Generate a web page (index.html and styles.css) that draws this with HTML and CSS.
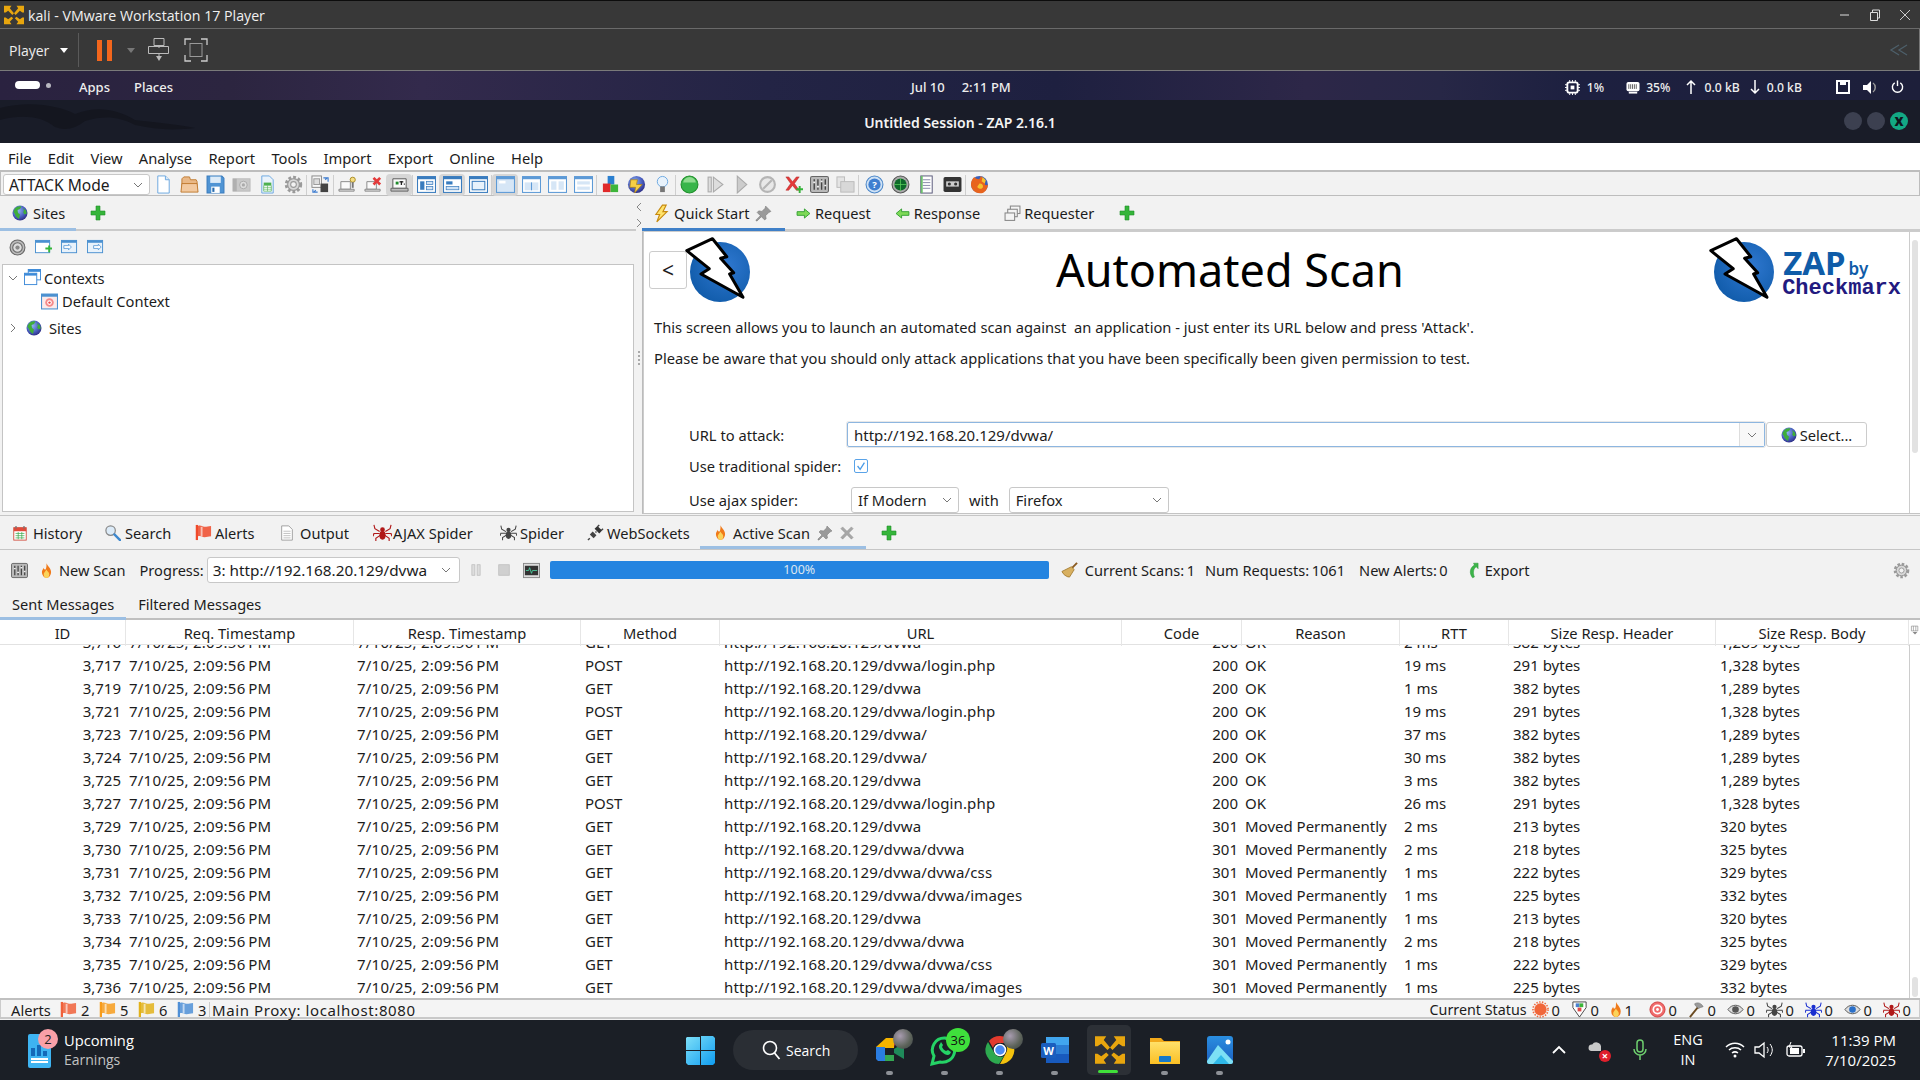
FILE: index.html
```html
<!DOCTYPE html>
<html lang="en">
<head>
<meta charset="utf-8">
<title>kali - VMware Workstation 17 Player</title>
<link rel="stylesheet" href="styles.css">
</head>
<body>
<svg class="sprite" width="0" height="0" aria-hidden="true">
<defs>
<radialGradient id="gGlobe" cx=".4" cy=".35" r=".7"><stop offset="0" stop-color="#8fb4ee"/><stop offset=".6" stop-color="#4a5fc0"/><stop offset="1" stop-color="#2b2a80"/></radialGradient>
<radialGradient id="gLogo" cx=".6" cy=".4" r=".7"><stop offset="0" stop-color="#2f78d0"/><stop offset="1" stop-color="#0f5aa8"/></radialGradient>
<linearGradient id="gWin" x1="0" y1="0" x2="1" y2="1"><stop offset="0" stop-color="#7fe0f8"/><stop offset="1" stop-color="#0f9cf0"/></linearGradient>
<linearGradient id="gFold" x1="0" y1="0" x2="0" y2="1"><stop offset="0" stop-color="#ffe06a"/><stop offset="1" stop-color="#fbbf24"/></linearGradient>
<linearGradient id="gPho" x1="0" y1="0" x2="0" y2="1"><stop offset="0" stop-color="#2a8ee0"/><stop offset="1" stop-color="#1c5fc0"/></linearGradient>
<symbol id="globe" viewBox="0 0 16 16"><circle cx="8" cy="8" r="7.5" fill="url(#gGlobe)"/><path d="M3 3.5C5 1 8 .8 9.5 1.5L8 4 5.5 5 6 8l2 1.500L7 14C4 12 3 10 3 9L1.500 7C1.500 6 2 5 3 3.500zM11 3l3 2.500.8 3-2.300 1-1.500-2.500L12 6z" fill="#3fae3a"/></symbol>
<symbol id="plus" viewBox="0 0 16 16"><path d="M6 1h4v5h5v4h-5v5H6v-5H1V6h5z" fill="#35b53a" stroke="#1f8f2a" stroke-width=".6"/></symbol>
<symbol id="bolt" viewBox="0 0 16 20"><path d="M9 1 2 11h4l-3 8 11-11H9.500L13 1z" fill="#ffe36b" stroke="#c78a10" stroke-width="1.200"/></symbol>
<symbol id="pin" viewBox="0 0 16 16"><path d="M10 1l5 5-2 1-3 3 .5 3L9 14 6 11l-4 4-1 0 0-1 4-4L2 7l1.500-1.500 3 .5 3-3z" fill="#9a9a9a" stroke="#777" stroke-width=".5"/></symbol>
<symbol id="aright" viewBox="0 0 16 12"><path d="M1 4h8V1l6 5-6 5V8H1z" fill="#7ed957" stroke="#2f9e2f"/></symbol>
<symbol id="aleft" viewBox="0 0 16 12"><path d="M15 4H7V1L1 6l6 5V8h8z" fill="#7ed957" stroke="#2f9e2f"/></symbol>
<symbol id="stack" viewBox="0 0 16 16"><rect x="6" y="1" width="9" height="7" fill="#f4f4f4" stroke="#888"/><rect x="3.500" y="4" width="9" height="7" fill="#f4f4f4" stroke="#888"/><rect x="1" y="7.500" width="9" height="7" fill="#f4f4f4" stroke="#888"/></symbol>
<symbol id="target" viewBox="0 0 16 16"><circle cx="8" cy="8" r="7" fill="#bbb" stroke="#666"/><circle cx="8" cy="8" r="4.500" fill="#ddd" stroke="#666"/><circle cx="8" cy="8" r="2" fill="#888"/></symbol>
<symbol id="winplus" viewBox="0 0 18 18"><rect x=".5" y="1.500" width="15" height="13" fill="#fff" stroke="#4a90d0"/><rect x=".5" y="1.500" width="15" height="2.500" fill="#4a90d0"/><path d="M11 9h3V7h2v2h2v2h-2v3h-2v-3h-3z" fill="#35b53a"/></symbol>
<symbol id="winin" viewBox="0 0 18 18"><rect x=".5" y="1.500" width="16" height="13" fill="#e8f2fb" stroke="#4a90d0"/><rect x=".5" y="1.500" width="16" height="2.500" fill="#4a90d0"/><path d="M3 7h5V5.500l3 3-3 3V10H3z" fill="#fff" stroke="#4a90d0" stroke-width=".8"/></symbol>
<symbol id="winout" viewBox="0 0 18 18"><rect x=".5" y="1.500" width="16" height="13" fill="#e8f2fb" stroke="#4a90d0"/><rect x=".5" y="1.500" width="16" height="2.500" fill="#4a90d0"/><path d="M7 7h5V5.500l3 3-3 3V10H7z" fill="#fff" stroke="#4a90d0" stroke-width=".8"/></symbol>
<symbol id="ctxs" viewBox="0 0 18 18"><rect x="4.500" y=".5" width="13" height="11" fill="#fff" stroke="#3d8ad8"/><rect x="4.500" y=".5" width="13" height="2.500" fill="#3d8ad8"/><rect x=".5" y="4.500" width="13" height="12" fill="#fff" stroke="#3d8ad8"/><rect x=".5" y="4.500" width="13" height="2.500" fill="#3d8ad8"/></symbol>
<symbol id="ctx" viewBox="0 0 16 16"><rect x=".5" y="1" width="15" height="14" fill="#fbeaea" stroke="#4a90d0"/><rect x=".5" y="1" width="15" height="2.500" fill="#4a90d0"/><circle cx="8" cy="9" r="4" fill="#f58a8a"/><circle cx="8" cy="9" r="2.200" fill="#fff"/><circle cx="8" cy="9" r="1.100" fill="#e8484a"/></symbol>
<symbol id="doc" viewBox="0 0 16 20"><path d="M2 1h8l4 4v14H2z" fill="#fff" stroke="#6aa8e0"/><path d="M10 1v4h4" fill="#d8e8f8" stroke="#6aa8e0"/></symbol>
<symbol id="folder" viewBox="0 0 20 20"><path d="M2 17V4l2-2h6l1 3h6l1 2v10z" fill="#e9b887" stroke="#c07a30"/><path d="M1 18l1-9h16l1 9z" fill="#f2c9a0" stroke="#c07a30"/></symbol>
<symbol id="floppy" viewBox="0 0 18 18"><path d="M1 1h14l2 2v14H1z" fill="#4f94d4" stroke="#3a7cbe"/><rect x="4" y="1.500" width="10" height="6" fill="#dcebf8"/><rect x="5" y="11" width="8" height="6" fill="#fff"/><rect x="6" y="12" width="2" height="4" fill="#2a6cae"/></symbol>
<symbol id="cam" viewBox="0 0 20 18"><rect x="1" y="3" width="18" height="13" fill="#c9c9c9" stroke="#bbb"/><circle cx="12" cy="9.500" r="4" fill="#ddd" stroke="#aaa"/><circle cx="12" cy="9.500" r="1.700" fill="#aaa"/><rect x="1" y="3" width="4" height="13" fill="#b0b0b0"/></symbol>
<symbol id="sheet" viewBox="0 0 16 20"><path d="M2 1h8l4 4v14H2z" fill="#eaf3fb" stroke="#6aa8e0"/><rect x="4" y="8" width="8" height="2.500" fill="#4db04d"/><path d="M4 11h8v6H4z" fill="#fff" stroke="#4db04d" stroke-width=".7"/><path d="M4 13h8M4 15h8M8 11v6" stroke="#4db04d" stroke-width=".6"/></symbol>
<symbol id="gear" viewBox="0 0 18 18"><circle cx="9" cy="9" r="6.500" fill="#ccc" stroke="#9a9a9a" stroke-width="3.500" stroke-dasharray="2.500 1.800"/><circle cx="9" cy="9" r="5.500" fill="#d8d8d8" stroke="#999"/><circle cx="9" cy="9" r="2.700" fill="#f2f2f2" stroke="#999"/></symbol>
<symbol id="sess" viewBox="0 0 20 20"><rect x="1" y="1" width="10" height="12" fill="#f8f8f8" stroke="#888"/><rect x="3" y="4" width="6" height="6" fill="#ddd" stroke="#999"/><rect x="10" y="9" width="8" height="9" fill="#444"/><path d="M13 3h5v4M17 3l-2 2" fill="none" stroke="#3d7cd0" stroke-width="1.200"/><path d="M2 15v3h5M3 18l2-2" fill="none" stroke="#3d7cd0" stroke-width="1.200"/></symbol>
<symbol id="lapbulb" viewBox="0 0 20 18"><path d="M3 6h10v8H3z" fill="#fafafa" stroke="#888"/><path d="M1 14h16v2H1z" fill="#ddd" stroke="#888"/><circle cx="15.500" cy="4" r="2.700" fill="#f5dd84" stroke="#a88a20"/><rect x="14.500" y="6.500" width="2" height="6" fill="#777"/></symbol>
<symbol id="lapx" viewBox="0 0 20 18"><path d="M3 6h10v8H3z" fill="#fafafa" stroke="#888"/><path d="M1 14h16v2H1z" fill="#ddd" stroke="#888"/><path d="M11 1l2.500 2.500L16 1l2 2-2.500 2.500L18 8l-2 2-2.500-2.500L11 10 9 8l2.500-2.500L9 3z" fill="#e33a3a"/></symbol>
<symbol id="lapot" viewBox="0 0 20 18"><path d="M3 3h14v10H3z" fill="#fafafa" stroke="#555"/><path d="M1 13h18v3H1z" fill="#bbb" stroke="#666"/><rect x="6" y="6" width="3" height="3" fill="#1d8a2a"/><rect x="10" y="5.500" width="4" height="1.400" fill="#222"/><rect x="11.300" y="5.500" width="1.400" height="4" fill="#222"/><rect x="14.500" y="8" width="1.200" height="1.200" fill="#222"/></symbol>
<symbol id="lay1" viewBox="0 0 18 18"><rect x=".5" y="1.500" width="17" height="15" fill="#fff" stroke="#3a7cbe"/><rect x=".5" y="1.500" width="17" height="2.500" fill="#3a7cbe"/><rect x="3" y="6" width="4" height="8" fill="#3a7cbe"/><rect x="9" y="6" width="6" height="3" fill="#cfe2f5" stroke="#3a7cbe" stroke-width=".7"/><rect x="9" y="11" width="6" height="3" fill="#cfe2f5" stroke="#3a7cbe" stroke-width=".7"/></symbol>
<symbol id="lay2" viewBox="0 0 18 18"><rect x=".5" y="1.500" width="17" height="15" fill="#fff" stroke="#3a7cbe"/><rect x=".5" y="1.500" width="17" height="2.500" fill="#3a7cbe"/><rect x="3" y="6" width="6" height="3" fill="#3a7cbe"/><rect x="3" y="11" width="12" height="3" fill="#cfe2f5" stroke="#3a7cbe" stroke-width=".7"/></symbol>
<symbol id="lay3" viewBox="0 0 18 18"><rect x=".5" y="1.500" width="17" height="15" fill="#fff" stroke="#3a7cbe"/><rect x=".5" y="1.500" width="17" height="2.500" fill="#3a7cbe"/><rect x="3" y="6" width="12" height="8" fill="#e8f2fb" stroke="#3a7cbe"/></symbol>
<symbol id="lay4" viewBox="0 0 18 18"><rect x=".5" y="1.500" width="17" height="15" fill="#d6e6f6" stroke="#5d9ad6"/><rect x=".5" y="1.500" width="17" height="2.500" fill="#5d9ad6"/><rect x="3" y="5.500" width="6" height="2.500" fill="#fff"/></symbol>
<symbol id="lay5" viewBox="0 0 18 18"><rect x=".5" y="1.500" width="17" height="15" fill="#fff" stroke="#5d9ad6"/><rect x=".5" y="1.500" width="17" height="2.500" fill="#5d9ad6"/><rect x="2.500" y="7" width="13" height="7.500" fill="#d6e6f6"/><rect x="8.500" y="7" width="1" height="7.500" fill="#5d9ad6"/></symbol>
<symbol id="lay6" viewBox="0 0 18 18"><rect x=".5" y="1.500" width="17" height="15" fill="#fff" stroke="#5d9ad6"/><rect x=".5" y="1.500" width="17" height="2.500" fill="#5d9ad6"/><rect x="3" y="6" width="5" height="8" fill="#d6e6f6"/><rect x="10" y="6" width="5" height="8" fill="#d6e6f6"/></symbol>
<symbol id="lay7" viewBox="0 0 18 18"><rect x=".5" y="1.500" width="17" height="15" fill="#fff" stroke="#5d9ad6"/><rect x=".5" y="1.500" width="17" height="2.500" fill="#5d9ad6"/><rect x="3" y="6" width="12" height="3" fill="#d6e6f6"/><rect x="3" y="11" width="12" height="3" fill="#d6e6f6"/></symbol>
<symbol id="blocks" viewBox="0 0 18 20"><rect x="6" y="1" width="7" height="9" fill="#2a7fd0"/><rect x="1" y="9" width="8" height="9" fill="#e02a2a"/><rect x="9" y="10" width="8" height="8" fill="#3db53a"/></symbol>
<symbol id="gbolt" viewBox="0 0 20 20"><circle cx="10" cy="10" r="9" fill="url(#gGlobe)"/><path d="M4 5h7l-1 5h6L8 19l1-6H3z" fill="#f6cf45" stroke="#a87a10" stroke-width=".7"/></symbol>
<symbol id="bulb" viewBox="0 0 16 20"><circle cx="8" cy="7" r="5.500" fill="#e8f2fb" stroke="#6aa8e0"/><rect x="5.500" y="12" width="5" height="6" fill="#777"/></symbol>
<symbol id="gball" viewBox="0 0 18 18"><circle cx="9" cy="9" r="8" fill="#38b54a" stroke="#1f8f2a"/><path d="M3 7a6 5 0 0 1 12 0z" fill="#8fdc8f"/></symbol>
<symbol id="step" viewBox="0 0 18 18"><rect x="2" y="2" width="3" height="14" fill="#ddd" stroke="#aaa"/><path d="M7 2l9 7-9 7z" fill="#ddd" stroke="#aaa"/></symbol>
<symbol id="play" viewBox="0 0 18 18"><path d="M5 1l9 8-9 8z" fill="#ccc" stroke="#aaa"/></symbol>
<symbol id="nosign" viewBox="0 0 18 18"><circle cx="9" cy="9" r="7" fill="#e8e8e8" stroke="#b5b5b5" stroke-width="2"/><path d="M5 13l8-8" stroke="#b5b5b5" stroke-width="2"/></symbol>
<symbol id="xplus" viewBox="0 0 20 20"><path d="M2 2h3l4 5 4-5h3l-5 7 5 7h-3l-4-5-4 5H2l5-7z" fill="#e33a3a" stroke="#b02020" stroke-width=".5"/><path d="M13 14h2.500v-2.500h2V14H20v2h-2.500v3h-2v-3H13z" fill="#35b53a"/></symbol>
<symbol id="mixer" viewBox="0 0 18 16"><rect x=".5" y=".5" width="17" height="15" rx="1.500" fill="#b9b9b9" stroke="#666"/><path d="M4 3v10M7.500 3v10M11 3v10M14.500 3v10" stroke="#444" stroke-width="1.300"/><path d="M3 6h2M6.500 10h2M10 5h2M13.500 9h2" stroke="#eee" stroke-width="1.500"/></symbol>
<symbol id="docs2" viewBox="0 0 20 18"><rect x="1" y="1" width="8" height="11" fill="#e4e4e4" stroke="#bbb"/><rect x="5" y="6" width="14" height="11" fill="#d8d8d8" stroke="#bbb"/></symbol>
<symbol id="help" viewBox="0 0 18 18"><circle cx="9" cy="9" r="8" fill="#cfe2f5" stroke="#4a86c8"/><circle cx="9" cy="9" r="5.800" fill="#3f7ed0"/><text x="9" y="12.500" font-size="9" font-family="Noto Sans" font-weight="700" text-anchor="middle" fill="#fff">?</text></symbol>
<symbol id="radar" viewBox="0 0 18 18"><circle cx="9" cy="9" r="8" fill="#aaa" stroke="#555"/><circle cx="9" cy="9" r="5.800" fill="#0e6a2a"/><path d="M9 3v12M3 9h12" stroke="#5bd05b" stroke-width=".7"/></symbol>
<symbol id="notes" viewBox="0 0 16 20"><rect x="2" y="1" width="12" height="18" fill="#fff" stroke="#557"/><path d="M4 5h8M4 8h8M4 11h8M4 14h8" stroke="#88a" /><rect x="2" y="1" width="2" height="18" fill="#6cbf6c"/></symbol>
<symbol id="tape" viewBox="0 0 18 16"><rect x=".5" y="1" width="17" height="14" rx="1.500" fill="#333"/><rect x="3" y="5" width="12" height="5" fill="#ccc"/><circle cx="6" cy="7.500" r="1.500" fill="#333"/><circle cx="12" cy="7.500" r="1.500" fill="#333"/></symbol>
<symbol id="firefox" viewBox="0 0 18 18"><circle cx="9" cy="9" r="8" fill="#3a5fb8"/><path d="M4 2C1 5 0 9 2 13s7 5 10 4 5-5 5-8c-1 1-2 1-3 0 1-3-1-6-4-8 0 2-1 3-2 3S6 4 4 2z" fill="#e8641e"/><path d="M12 2l3 3-1 3-3-2z" fill="#f5c22e"/><path d="M9 8c2 0 4 1 3 4-2 2-5 1-5-1z" fill="#f5c22e"/></symbol>
<symbol id="cal" viewBox="0 0 16 18"><rect x="1" y="3" width="14" height="14" fill="#fff" stroke="#d04a3a"/><rect x="1" y="3" width="14" height="4" fill="#e04a3a"/><path d="M3.500 1v3M12.500 1v3" stroke="#777" stroke-width="1.500"/><path d="M3 9.500h10M3 12h10M3 14.500h10M6 8v8M10 8v8" stroke="#3aa84a" stroke-width=".8"/></symbol>
<symbol id="mag" viewBox="0 0 18 18"><circle cx="7" cy="7" r="5" fill="#dcebf8" stroke="#888" stroke-width="1.300"/><path d="M11 11l6 6" stroke="#3d88cf" stroke-width="2.500" stroke-linecap="round"/></symbol>
<symbol id="flag" viewBox="0 0 18 18"><path d="M2 1v16" stroke="currentColor" stroke-width="2.400"/><path d="M3 2c4-1 4 1 7 1s4-1 7-1v11c-3 0-4 1-7 1s-3-2-7-1z" fill="currentColor" opacity=".85"/><path d="M7 3v10" stroke="#fff" stroke-opacity=".6" stroke-width="2"/></symbol>
<symbol id="page" viewBox="0 0 14 18"><path d="M1 1h8l4 4v12H1z" fill="#fff" stroke="#999"/><path d="M3 7h8M3 9.500h8M3 12h8M3 14.500h8" stroke="#aaa" stroke-width=".8"/></symbol>
<symbol id="spider" viewBox="0 0 20 20"><ellipse cx="10" cy="13" rx="3.300" ry="4.500" fill="currentColor"/><circle cx="10" cy="7" r="2.500" fill="currentColor"/><path d="M7 9 2 6 1 2M7 11l-6 0-1 3M7.500 13 3 16l0 3M13 9l5-3 1-4M13 11l6 0 1 3M12.500 13l4.500 3 0 3" stroke="currentColor" stroke-width="1.200" fill="none"/></symbol>
<symbol id="plug" viewBox="0 0 18 18"><path d="M11 2l5 5-3 3-5-5z" fill="#333"/><path d="M13 1l-2 2M17 5l-2 2" stroke="#444" stroke-width="1.500"/><path d="M6 8l4 4-3 3-4-4z" fill="#444"/><path d="M3 15l-2 2M9 9l1-1" stroke="#444" stroke-width="1.500"/></symbol>
<symbol id="flame" viewBox="0 0 12 18"><path d="M6 1c1 3 5 5 5 10a5 6 0 0 1-10 0c0-2 1-3 2-5 0 2 1 2 2 2 1-2 1-4 1-7z" fill="#f07a1a"/><path d="M6 8c.5 2 3 3 3 5a3 4 0 0 1-6 0c0-1 1-2 3-5z" fill="#fbd35a"/></symbol>
<symbol id="xgrey" viewBox="0 0 16 16"><path d="M3 1l5 5 5-5 2 2-5 5 5 5-2 2-5-5-5 5-2-2 5-5-5-5z" fill="#a8a8a8" stroke="#888" stroke-width=".5"/></symbol>
<symbol id="pause2" viewBox="0 0 16 16"><rect x="2.500" y="1" width="4" height="14" fill="#ddd" stroke="#bbb"/><rect x="9.500" y="1" width="4" height="14" fill="#ddd" stroke="#bbb"/></symbol>
<symbol id="stop2" viewBox="0 0 16 16"><rect x="1" y="1" width="14" height="14" fill="#d0d0d0" stroke="#bbb"/></symbol>
<symbol id="chart" viewBox="0 0 18 16"><rect x=".5" y=".5" width="17" height="15" fill="#ddd" stroke="#888"/><rect x="2" y="3" width="14" height="10" fill="#333"/><path d="M3 8h3l1-3 2 6 1-3h5" fill="none" stroke="#4bd0a0" stroke-width=".9"/></symbol>
<symbol id="broom" viewBox="0 0 18 18"><path d="M17 1l-6 6" stroke="#8a5a20" stroke-width="2"/><path d="M11 5l3 3-5 8c-3 0-7-3-8-6z" fill="#d8b060" stroke="#9a7020" stroke-width=".8"/></symbol>
<symbol id="export" viewBox="0 0 12 18"><path d="M11 1l0 6-2-2C6 7 5 11 7 16l-2 1C1 12 2 6 7 3L6 1z" fill="#3cb54a" stroke="#1f8f2a" stroke-width=".5"/></symbol>
<symbol id="sun" viewBox="0 0 18 18"><circle cx="9" cy="9" r="6.500" fill="#f0663a"/><circle cx="9" cy="9" r="8" fill="none" stroke="#f0663a" stroke-width="1.700" stroke-dasharray="1.500 1.500"/></symbol>
<symbol id="shield" viewBox="0 0 18 18"><path d="M2 1h14v6l-7 10L2 7z" fill="#fff" stroke="#444"/><rect x="5" y="2.500" width="4" height="4" fill="#4a80d0"/><rect x="9" y="2.500" width="4" height="4" fill="#3db53a"/><rect x="7" y="7" width="4" height="4" fill="#e04a4a"/></symbol>
<symbol id="bullseye" viewBox="0 0 18 18"><circle cx="9" cy="9" r="8" fill="#f06a6a" stroke="#d04040"/><circle cx="9" cy="9" r="5.300" fill="#fff"/><circle cx="9" cy="9" r="3.500" fill="#f06a6a"/><circle cx="9" cy="9" r="1.500" fill="#fff"/></symbol>
<symbol id="hammer" viewBox="0 0 18 18"><path d="M2 17l9-11" stroke="#6a4a20" stroke-width="2"/><path d="M7 3c3-2 7-1 9 3l-3 1-2 1-3-3z" fill="#9a9a9a" stroke="#666" stroke-width=".6"/></symbol>
<symbol id="eye" viewBox="0 0 18 14"><path d="M1 7c4-6 12-6 16 0-4 6-12 6-16 0z" fill="#ddd" stroke="#555"/><circle cx="9" cy="7" r="3.500" fill="currentColor"/></symbol>
<symbol id="vm" viewBox="0 0 24 24"><g fill="#e8a60e"><path d="M0 1h9L7 4l5 6-2 2-5-5-3 2-2 0z"/><path d="M24 1h-9l2 3-5 6 2 2 5-5 3 2 2 0z"/><path d="M0 23h9l-2-3 4-4-2-2-4 3-3-2-2 0z"/><path d="M24 23h-9l2-3-4-4 2-2 4 3 3-2 2 0z"/></g></symbol>
<symbol id="zap" viewBox="0 0 72 70"><ellipse cx="35" cy="36" rx="30" ry="30" fill="url(#gLogo)"/><path d="M27.500 2.700 1.800 14.700 24.200 32.700 16 38 58 61.300 44.600 38 48.700 36.700 35.600 22.300 41.800 20.700z" fill="#fff" stroke="#000" stroke-width="3" stroke-linejoin="round"/></symbol>
<symbol id="chev" viewBox="0 0 10 6"><path d="M1 1l4 4 4-4" fill="none" stroke="#777"/></symbol>
</defs>
</svg>

<header class="vm-title">
  <svg class="vm-logo"><use href="#vm"/></svg>
  <span>kali - VMware Workstation 17 Player</span>
  <div class="win-ctrl">
    <svg viewBox="0 0 12 12"><path d="M1 6h9" stroke="#ddd"/></svg>
    <svg viewBox="0 0 12 12"><path d="M1.500 3.500h7v8h-7zM3.500 3V1h7v8H9" fill="none" stroke="#ddd"/></svg>
    <svg viewBox="0 0 12 12"><path d="M1 1l10 10M11 1L1 11" stroke="#ddd" stroke-width=".9"/></svg>
  </div>
</header>
<div class="vm-bar">
  <span class="vm-player">Player</span><i class="caret white"></i>
  <i class="vm-sep"></i>
  <div class="pause"><b></b><b></b></div><i class="caret grey"></i>
  <svg class="vm-send" viewBox="0 0 22 24"><path d="M6 .5h10v7H6zM.5 8.500h20v7H.5zM11 8v2M11 15.500v5" fill="none" stroke="#bbb"/><path d="M8 18h6l-3 5z" fill="#bbb"/></svg>
  <svg class="vm-full" viewBox="0 0 24 24"><path d="M1 7V1h6M17 1h6v6M23 17v6h-6M7 23H1v-6" fill="none" stroke="#ccc" stroke-width="1.300"/><rect x="6" y="5.500" width="12" height="13" fill="none" stroke="#999"/></svg>
  <svg class="vm-more" viewBox="0 0 18 12"><path d="M9 1 1 6l8 5M17 1 9 6l8 5" fill="none" stroke="#4d5f6a" stroke-width="1.300"/></svg>
</div>

<div class="kali-bar">
  <i class="pill"></i><i class="pdot"></i>
  <span class="k-apps">Apps</span><span class="k-places">Places</span>
  <span class="k-date">Jul 10</span><span class="k-time">2:11 PM</span>
  <svg class="k-cpu" viewBox="0 0 16 16"><rect x="2.500" y="2.500" width="11" height="11" rx="2" fill="none" stroke="#fff" stroke-width="2"/><rect x="6" y="6" width="4" height="4" fill="#fff"/><path d="M5 0v2M8 0v2M11 0v2M5 14v2M8 14v2M11 14v2M0 5h2M0 8h2M0 11h2M14 5h2M14 8h2M14 11h2" stroke="#fff"/></svg>
  <span class="k-t k-1">1%</span>
  <svg class="k-mem" viewBox="0 0 15 13"><rect x=".5" y=".5" width="14" height="10" rx="2" fill="#fff"/><path d="M3 3v5M5 3v5M7 3v5M9 3v5M11 3v5" stroke="#333" stroke-width=".8"/><rect x="3" y="11" width="9" height="2" fill="#fff"/></svg>
  <span class="k-t k-35">35%</span>
  <svg class="k-up" viewBox="0 0 10 14"><path d="M5 14V1M1 5l4-4 4 4" fill="none" stroke="#fff" stroke-width="1.500"/></svg><span class="k-t k-r1">0.0 kB</span>
  <svg class="k-down" viewBox="0 0 10 14"><path d="M5 0v13M1 9l4 4 4-4" fill="none" stroke="#fff" stroke-width="1.500"/></svg><span class="k-t k-r2">0.0 kB</span>
  <svg class="k-scr" viewBox="0 0 14 14"><path d="M1 1h12v12H1z" fill="none" stroke="#fff" stroke-width="2"/><path d="M4 1h6v4H4z" fill="#fff"/></svg>
  <svg class="k-vol" viewBox="0 0 15 15"><path d="M0 5h4l4-4v13l-4-4H0z" fill="#fff"/><path d="M10 3c3 2 3 7 0 9" stroke="#999" fill="none" stroke-width="1.500"/></svg>
  <svg class="k-pow" viewBox="0 0 14 14"><path d="M7 0v6" stroke="#fff" stroke-width="1.500"/><path d="M4 2.500a5.500 5.500 0 1 0 6 0" stroke="#fff" fill="none" stroke-width="1.500"/></svg>
</div>
<div class="zap-title">
  <svg class="dragon" viewBox="0 0 220 43"><path d="M0 8c30-8 60-2 75 6 20-8 40-6 60 6 15 2 40 4 60 8-25 3-40 1-60-3-15-8-30-10-50-4-10 8-20 10-30 6C40 15 20 15 0 20z" fill="#14161f"/></svg>
  <span class="zap-name">Untitled Session - ZAP 2.16.1</span>
  <div class="dots"><i></i><i></i><i class="cl">x</i></div>
</div>

<nav class="menu">
  <span>File</span><span>Edit</span><span>View</span><span>Analyse</span><span>Report</span><span>Tools</span><span>Import</span><span>Export</span><span>Online</span><span>Help</span>
</nav>

<div class="tool">
  <div class="combo mode"><span>ATTACK Mode</span><svg class="chev"><use href="#chev"/></svg></div>
  <a class="tb"><svg><use href="#doc"/></svg></a><a class="tb"><svg><use href="#folder"/></svg></a><a class="tb"><svg><use href="#floppy"/></svg></a><a class="tb"><svg><use href="#cam"/></svg></a><a class="tb"><svg><use href="#sheet"/></svg></a><a class="tb"><svg><use href="#gear"/></svg></a><i class="tsep"></i>
  <a class="tb"><svg><use href="#sess"/></svg></a><i class="tsep"></i>
  <a class="tb"><svg><use href="#lapbulb"/></svg></a><a class="tb"><svg><use href="#lapx"/></svg></a><a class="tb on"><svg><use href="#lapot"/></svg></a><i class="tsep"></i>
  <a class="tb"><svg><use href="#lay1"/></svg></a><a class="tb on"><svg><use href="#lay2"/></svg></a><a class="tb"><svg><use href="#lay3"/></svg></a><i class="tsep"></i>
  <a class="tb on"><svg><use href="#lay4"/></svg></a><a class="tb"><svg><use href="#lay5"/></svg></a><a class="tb"><svg><use href="#lay6"/></svg></a><a class="tb"><svg><use href="#lay7"/></svg></a><i class="tsep"></i>
  <a class="tb"><svg><use href="#blocks"/></svg></a><a class="tb"><svg><use href="#gbolt"/></svg></a><a class="tb"><svg><use href="#bulb"/></svg></a><i class="tsep"></i>
  <a class="tb"><svg><use href="#gball"/></svg></a><a class="tb"><svg><use href="#step"/></svg></a><a class="tb"><svg><use href="#play"/></svg></a><a class="tb"><svg><use href="#nosign"/></svg></a><a class="tb"><svg><use href="#xplus"/></svg></a><a class="tb"><svg><use href="#mixer"/></svg></a><a class="tb"><svg><use href="#docs2"/></svg></a><i class="tsep wide"></i>
  <a class="tb"><svg><use href="#help"/></svg></a><a class="tb"><svg><use href="#radar"/></svg></a><a class="tb"><svg><use href="#notes"/></svg></a><a class="tb"><svg><use href="#tape"/></svg></a><i class="tsep"></i>
  <a class="tb"><svg><use href="#firefox"/></svg></a>
</div>

<main class="upper">
  <section class="left">
    <div class="tabs ltabs">
      <div class="tab sel w76"><svg class="i15"><use href="#globe"/></svg><span>Sites</span></div>
      <svg class="i15 add"><use href="#plus"/></svg>
    </div>
    <div class="ltool">
      <svg class="i16"><use href="#target"/></svg><svg class="i16"><use href="#winplus"/></svg><svg class="i16"><use href="#winin"/></svg><svg class="i16"><use href="#winout"/></svg>
    </div>
    <div class="tree">
      <div class="node n1"><svg class="chv"><use href="#chev"/></svg><svg class="i16"><use href="#ctxs"/></svg><span>Contexts</span></div>
      <div class="node n2"><svg class="i16"><use href="#ctx"/></svg><span>Default Context</span></div>
      <div class="node n3"><svg class="chv rot"><use href="#chev"/></svg><svg class="i15"><use href="#globe"/></svg><span>Sites</span></div>
    </div>
  </section>
  <div class="vsplit">
    <svg viewBox="0 0 6 8"><path d="M5 0 1 4l4 4" fill="none" stroke="#888"/></svg>
    <svg viewBox="0 0 6 8"><path d="M1 0l4 4-4 4" fill="none" stroke="#888"/></svg>
    <i class="vgrip"></i>
  </div>
  <section class="right">
    <div class="tabs rtabs">
      <div class="tab qs"><svg class="i-bolt"><use href="#bolt"/></svg><span>Quick Start</span><svg class="i16"><use href="#pin"/></svg></div>
      <div class="tab r1"><svg class="i-arrow"><use href="#aright"/></svg><span>Request</span></div>
      <div class="tab r2"><svg class="i-arrow"><use href="#aleft"/></svg><span>Response</span></div>
      <div class="tab r3"><svg class="i16"><use href="#stack"/></svg><span>Requester</span></div>
      <svg class="i15 add2"><use href="#plus"/></svg>
    </div>
    <div class="panel">
      <div class="scan">
        <div class="scan-head">
          <button class="back">&lt;</button>
          <svg class="zaplogo"><use href="#zap"/></svg>
          <h1>Automated Scan</h1>
          <div class="brand">
            <svg class="zaplogo"><use href="#zap"/></svg>
            <div class="brand-t"><div class="brand-l1"><b class="bz">ZAP</b><b class="by">by</b></div><b class="bc">Checkmarx</b></div>
          </div>
        </div>
        <p class="p1">This screen allows you to launch an automated scan against&nbsp; an application - just enter its URL below and press 'Attack'.</p>
        <p class="p2">Please be aware that you should only attack applications that you have been specifically been given permission to test.</p>
        <div class="frow url">
          <label>URL to attack:</label>
          <div class="urlbox"><span>http://192.168.20.129/dvwa/</span><i class="urldrop"><svg class="chev"><use href="#chev"/></svg></i></div>
          <button class="select"><svg class="i15"><use href="#globe"/></svg>Select...</button>
        </div>
        <div class="frow trad">
          <label>Use traditional spider:</label>
          <i class="check"><svg viewBox="0 0 14 14"><path d="M3 7l3 4 5-8" fill="none" stroke="#4a9be8" stroke-width="1.500"/></svg></i>
        </div>
        <div class="frow ajax">
          <label>Use ajax spider:</label>
          <div class="combo cm1"><span>If Modern</span><svg class="chev"><use href="#chev"/></svg></div>
          <span class="with">with</span>
          <div class="combo cm2"><span>Firefox</span><svg class="chev"><use href="#chev"/></svg></div>
        </div>
      </div>
      <div class="vscroll"><i></i></div>
    </div>
  </section>
</main>
<div class="hgrip"></div>

<div class="btabs">
  <div class="btab w-hist"><svg class="i15"><use href="#cal"/></svg><span>History</span></div>
  <div class="btab w-sear"><svg class="i16"><use href="#mag"/></svg><span>Search</span></div>
  <div class="btab w-aler"><svg class="i16 c-red"><use href="#flag"/></svg><span>Alerts</span></div>
  <div class="btab w-outp"><svg class="i15"><use href="#page"/></svg><span>Output</span></div>
  <div class="btab w-ajax"><svg class="i18 c-dred"><use href="#spider"/></svg><span>AJAX Spider</span></div>
  <div class="btab w-spid"><svg class="i16 c-dgrey"><use href="#spider"/></svg><span>Spider</span></div>
  <div class="btab w-webs"><svg class="i16"><use href="#plug"/></svg><span>WebSockets</span></div>
  <div class="btab w-acti"><svg class="i-fl"><use href="#flame"/></svg><span>Active Scan</span><svg class="i15"><use href="#pin"/></svg><svg class="i14"><use href="#xgrey"/></svg></div>
  <svg class="i15 add3"><use href="#plus"/></svg>
</div>

<div class="scanbar">
  <svg class="i16 sb-mix"><use href="#mixer"/></svg>
  <svg class="i-fl sb-fl"><use href="#flame"/></svg><span class="sb-new">New Scan</span>
  <span class="sb-prog">Progress:</span>
  <div class="combo pcombo"><span>3: http://192.168.20.129/dvwa</span><svg class="chev"><use href="#chev"/></svg></div>
  <svg class="i12 sb-p"><use href="#pause2"/></svg>
  <svg class="i12 sb-s"><use href="#stop2"/></svg>
  <svg class="i16 sb-c"><use href="#chart"/></svg>
  <div class="bar">100%</div>
  <svg class="i16 sb-b"><use href="#broom"/></svg>
  <span class="sb-cs">Current Scans:&#8239;1</span>
  <span class="sb-nr">Num Requests:&#8239;1061</span>
  <span class="sb-na">New Alerts:&#8239;0</span>
  <svg class="i-ex"><use href="#export"/></svg><span class="sb-ex">Export</span>
  <svg class="i16 sb-g"><use href="#gear"/></svg>
</div>

<div class="subtabs">
  <div class="st sel">Sent Messages</div><div class="st">Filtered Messages</div>
</div>

<section class="grid">
  <div class="hdr">
    <div>ID</div><div>Req. Timestamp</div><div>Resp. Timestamp</div><div>Method</div><div>URL</div><div>Code</div><div>Reason</div><div>RTT</div><div>Size Resp. Header</div><div>Size Resp. Body</div>
    <div class="corner"><svg viewBox="0 0 10 12"><path d="M.5.5h8v6h-8zM3 .5v6M6 .5v6" fill="none" stroke="#888" stroke-width=".8"/><path d="M2 8h6l-3 3z" fill="#888"/></svg></div>
  </div>
  <div class="gbody">
    <div class="rows">
      <div class="row"><i>3,716</i><i>7/10/25, 2:09:56&#8239;PM</i><i>7/10/25, 2:09:56&#8239;PM</i><i>GET</i><i>http://192.168.20.129/dvwa</i><i>200</i><i>OK</i><i>2 ms</i><i>382 bytes</i><i>1,289 bytes</i></div>
      <div class="row"><i>3,717</i><i>7/10/25, 2:09:56&#8239;PM</i><i>7/10/25, 2:09:56&#8239;PM</i><i>POST</i><i>http://192.168.20.129/dvwa/login.php</i><i>200</i><i>OK</i><i>19 ms</i><i>291 bytes</i><i>1,328 bytes</i></div>
      <div class="row"><i>3,719</i><i>7/10/25, 2:09:56&#8239;PM</i><i>7/10/25, 2:09:56&#8239;PM</i><i>GET</i><i>http://192.168.20.129/dvwa</i><i>200</i><i>OK</i><i>1 ms</i><i>382 bytes</i><i>1,289 bytes</i></div>
      <div class="row"><i>3,721</i><i>7/10/25, 2:09:56&#8239;PM</i><i>7/10/25, 2:09:56&#8239;PM</i><i>POST</i><i>http://192.168.20.129/dvwa/login.php</i><i>200</i><i>OK</i><i>19 ms</i><i>291 bytes</i><i>1,328 bytes</i></div>
      <div class="row"><i>3,723</i><i>7/10/25, 2:09:56&#8239;PM</i><i>7/10/25, 2:09:56&#8239;PM</i><i>GET</i><i>http://192.168.20.129/dvwa/</i><i>200</i><i>OK</i><i>37 ms</i><i>382 bytes</i><i>1,289 bytes</i></div>
      <div class="row"><i>3,724</i><i>7/10/25, 2:09:56&#8239;PM</i><i>7/10/25, 2:09:56&#8239;PM</i><i>GET</i><i>http://192.168.20.129/dvwa/</i><i>200</i><i>OK</i><i>30 ms</i><i>382 bytes</i><i>1,289 bytes</i></div>
      <div class="row"><i>3,725</i><i>7/10/25, 2:09:56&#8239;PM</i><i>7/10/25, 2:09:56&#8239;PM</i><i>GET</i><i>http://192.168.20.129/dvwa</i><i>200</i><i>OK</i><i>3 ms</i><i>382 bytes</i><i>1,289 bytes</i></div>
      <div class="row"><i>3,727</i><i>7/10/25, 2:09:56&#8239;PM</i><i>7/10/25, 2:09:56&#8239;PM</i><i>POST</i><i>http://192.168.20.129/dvwa/login.php</i><i>200</i><i>OK</i><i>26 ms</i><i>291 bytes</i><i>1,328 bytes</i></div>
      <div class="row"><i>3,729</i><i>7/10/25, 2:09:56&#8239;PM</i><i>7/10/25, 2:09:56&#8239;PM</i><i>GET</i><i>http://192.168.20.129/dvwa</i><i>301</i><i>Moved Permanently</i><i>2 ms</i><i>213 bytes</i><i>320 bytes</i></div>
      <div class="row"><i>3,730</i><i>7/10/25, 2:09:56&#8239;PM</i><i>7/10/25, 2:09:56&#8239;PM</i><i>GET</i><i>http://192.168.20.129/dvwa/dvwa</i><i>301</i><i>Moved Permanently</i><i>2 ms</i><i>218 bytes</i><i>325 bytes</i></div>
      <div class="row"><i>3,731</i><i>7/10/25, 2:09:56&#8239;PM</i><i>7/10/25, 2:09:56&#8239;PM</i><i>GET</i><i>http://192.168.20.129/dvwa/dvwa/css</i><i>301</i><i>Moved Permanently</i><i>1 ms</i><i>222 bytes</i><i>329 bytes</i></div>
      <div class="row"><i>3,732</i><i>7/10/25, 2:09:56&#8239;PM</i><i>7/10/25, 2:09:56&#8239;PM</i><i>GET</i><i>http://192.168.20.129/dvwa/dvwa/images</i><i>301</i><i>Moved Permanently</i><i>1 ms</i><i>225 bytes</i><i>332 bytes</i></div>
      <div class="row"><i>3,733</i><i>7/10/25, 2:09:56&#8239;PM</i><i>7/10/25, 2:09:56&#8239;PM</i><i>GET</i><i>http://192.168.20.129/dvwa</i><i>301</i><i>Moved Permanently</i><i>1 ms</i><i>213 bytes</i><i>320 bytes</i></div>
      <div class="row"><i>3,734</i><i>7/10/25, 2:09:56&#8239;PM</i><i>7/10/25, 2:09:56&#8239;PM</i><i>GET</i><i>http://192.168.20.129/dvwa/dvwa</i><i>301</i><i>Moved Permanently</i><i>2 ms</i><i>218 bytes</i><i>325 bytes</i></div>
      <div class="row"><i>3,735</i><i>7/10/25, 2:09:56&#8239;PM</i><i>7/10/25, 2:09:56&#8239;PM</i><i>GET</i><i>http://192.168.20.129/dvwa/dvwa/css</i><i>301</i><i>Moved Permanently</i><i>1 ms</i><i>222 bytes</i><i>329 bytes</i></div>
      <div class="row"><i>3,736</i><i>7/10/25, 2:09:56&#8239;PM</i><i>7/10/25, 2:09:56&#8239;PM</i><i>GET</i><i>http://192.168.20.129/dvwa/dvwa/images</i><i>301</i><i>Moved Permanently</i><i>1 ms</i><i>225 bytes</i><i>332 bytes</i></div>
    </div>
    <div class="gscroll"><i></i></div>
  </div>
</section>

<footer class="status">
  <div class="st-left">
    <span class="al">Alerts</span>
    <span class="fl"><svg class="i16 c-fr"><use href="#flag"/></svg>2</span>
    <span class="fl"><svg class="i16 c-fo"><use href="#flag"/></svg>5</span>
    <span class="fl"><svg class="i16 c-fy"><use href="#flag"/></svg>6</span>
    <span class="fl"><svg class="i16 c-fb"><use href="#flag"/></svg>3</span>
    <i class="st-sep"></i>
    <span class="proxy">Main Proxy: localhost:8080</span>
  </div>
  <div class="st-right">
    <span class="cs">Current Status</span>
    <span class="si"><svg class="i16"><use href="#sun"/></svg>0</span>
    <span class="si"><svg class="i16"><use href="#shield"/></svg>0</span>
    <span class="si"><svg class="i-fl2"><use href="#flame"/></svg>1</span>
    <span class="si"><svg class="i16"><use href="#bullseye"/></svg>0</span>
    <span class="si"><svg class="i16"><use href="#hammer"/></svg>0</span>
    <span class="si"><svg class="i16 c-dk"><use href="#eye"/></svg>0</span>
    <span class="si"><svg class="i16 c-dgrey"><use href="#spider"/></svg>0</span>
    <span class="si"><svg class="i16 c-blue"><use href="#spider"/></svg>0</span>
    <span class="si"><svg class="i16 c-lb"><use href="#eye"/></svg>0</span>
    <span class="si"><svg class="i16 c-dred"><use href="#spider"/></svg>0</span>
  </div>
</footer>

<div class="taskbar">
  <div class="widget">
    <div class="w-ic">
      <svg viewBox="0 0 24 36"><rect y="2" width="23" height="34" rx="2" fill="#3eb4f2"/><rect x="3" y="16" width="4" height="8" fill="#1469b8"/><rect x="9" y="13" width="4" height="11" fill="#1469b8"/><rect x="15" y="19" width="4" height="5" fill="#1469b8"/><path d="M3 27h17M3 30h17" stroke="#fff" stroke-width="2"/></svg>
      <b class="w-badge">2</b>
    </div>
    <div class="w-t"><span>Upcoming</span><span class="w-s">Earnings</span></div>
  </div>
  <svg class="start" viewBox="0 0 29 29"><path d="M1 1h13v13H0V2zM15 0h12l2 2v12H15zM0 15h14v14H2l-2-2zM15 15h14v12l-2 2H15z" fill="url(#gWin)"/></svg>
  <div class="search">
    <svg viewBox="0 0 18 20"><circle cx="8" cy="8" r="6.500" fill="none" stroke="#fff" stroke-width="1.600"/><path d="M12.500 13l5 6" stroke="#fff" stroke-width="1.800"/></svg>
    <span>Search</span>
  </div>
  <div class="apps">
    <div class="app"><svg viewBox="0 0 30 30"><path d="M1 12 11 3h8v10H1z" fill="#f4b400"/><path d="M1 12h9v6H1z" fill="#2a7de1"/><path d="M1 18h9v8H3l-2-2z" fill="#2a7de1"/><path d="M10 20h9v6H10z" fill="#34a853"/><path d="M19 3h3l-3 9z" fill="#e33a3a"/><path d="M19 14l10-6v16l-10-6z" fill="#1f8a5a"/></svg><i class="avatar"></i><i class="adot"></i></div>
    <div class="app"><svg viewBox="0 0 30 30"><path d="M15 3a12 12 0 0 0-11 18L2 29l8-2a12 12 0 1 0 5-24z" fill="none" stroke="#25d366" stroke-width="3"/><path d="M10 9c-2 2-1 5 2 8s6 4 8 2l1-2-3-2-2 1c-2-1-3-2-4-4l1-2-2-3z" fill="#25d366"/></svg><b class="wa">36</b><i class="adot"></i></div>
    <div class="app"><svg viewBox="0 0 30 30"><path d="M15 1a14 14 0 0 1 12 7H15a7 7 0 0 0-7 5L4 6a14 14 0 0 1 11-5z" fill="#e33b2e"/><path d="M28 9a14 14 0 0 1-13 20l6-11a7 7 0 0 0-1-9z" fill="#f4c20d"/><path d="M3 7l7 12a7 7 0 0 0 9 2l-5 8A14 14 0 0 1 3 7z" fill="#2da94f"/><circle cx="15" cy="15" r="5.500" fill="#4a8af4" stroke="#fff" stroke-width="1.500"/></svg><i class="avatar"></i><i class="adot"></i></div>
    <div class="app"><svg viewBox="0 0 30 30"><rect x="6" y="2" width="23" height="26" rx="2" fill="#2b7cd3"/><path d="M6 2h23v8H6z" fill="#41a5ee"/><path d="M6 19h23v9H6z" fill="#185abd"/><rect x="1" y="8" width="15" height="15" rx="1.500" fill="#1b5ebe"/><text x="8.500" y="20" font-size="11" font-weight="700" font-family="Noto Sans" text-anchor="middle" fill="#fff">W</text></svg><i class="adot"></i></div>
    <div class="app active"><svg class="sm" viewBox="0 0 24 24"><use href="#vm"/></svg><i class="aline"></i></div>
    <div class="app"><svg viewBox="0 0 30 30"><path d="M0 3h11l3 3h16v23H0z" fill="#f2a91b"/><path d="M0 7h30v22H0z" fill="url(#gFold)"/><rect x="9" y="21" width="12" height="6" rx="1" fill="#1679c8"/></svg><i class="adot"></i></div>
    <div class="app"><svg viewBox="0 0 30 30"><rect x="2" y="1" width="26" height="28" rx="3" fill="url(#gPho)"/><circle cx="23" cy="7" r="2.500" fill="#fff"/><path d="M2 26l11-16 15 16v1a2 2 0 0 1-2 2H4a2 2 0 0 1-2-2z" fill="#7de0f5"/><path d="M8 29l8-9 8 9z" fill="#2fb8e8"/></svg><i class="adot"></i></div>
  </div>
  <div class="tray">
    <svg class="tr-up" viewBox="0 0 14 8"><path d="M1 7l6-6 6 6" fill="none" stroke="#fff" stroke-width="1.800"/></svg>
    <div class="tr-cloud"><svg viewBox="0 0 20 16"><path d="M3 13a4 4 0 0 1 1-8 6 6 0 0 1 11 2v6z" fill="#c9c9c9"/></svg><b>×</b></div>
    <svg class="tr-mic" viewBox="0 0 14 22"><rect x="4" y="1" width="6" height="12" rx="3" fill="none" stroke="#6fd06f" stroke-width="1.500"/><path d="M1 10a6 6 0 0 0 12 0M7 16v5" fill="none" stroke="#6fd06f" stroke-width="1.500"/></svg>
    <div class="tr-lang"><span>ENG</span><span>IN</span></div>
    <svg class="tr-wifi" viewBox="0 0 20 16"><path d="M1 5c5-5 13-5 18 0M4 8c3-3 9-3 12 0M7 11c2-1.500 4-1.500 6 0" fill="none" stroke="#fff" stroke-width="1.500"/><circle cx="10" cy="14" r="1.500" fill="#fff"/></svg>
    <svg class="tr-vol" viewBox="0 0 20 16"><path d="M1 5h4l5-4v14l-5-4H1z" fill="none" stroke="#fff" stroke-width="1.300"/><path d="M13 5c1.500 2 1.500 4 0 6M16 2c3 4 3 8 0 12" fill="none" stroke="#fff"/></svg>
    <svg class="tr-bat" viewBox="0 0 20 16"><rect x="1" y="4" width="15" height="10" rx="2" fill="none" stroke="#fff" stroke-width="1.300"/><rect x="4" y="6" width="9" height="6" fill="#fff"/><rect x="17" y="7" width="2" height="4" fill="#fff"/><path d="M5 0 3 5h3L4 8" fill="none" stroke="#fff"/></svg>
    <div class="tr-clock"><span>11:39 PM</span><span>7/10/2025</span></div>
  </div>
</div>
</body>
</html>
```
FILE: styles.css
```css
* { box-sizing: border-box; }
html, body { margin: 0; padding: 0; width: 1920px; height: 1080px; overflow: hidden; }
body { font-family: "Noto Sans", "Liberation Sans", sans-serif; font-size: 14.6px; color: #1c1c1c; background: #f2f2f2; display: flex; flex-direction: column; }
i, b { font-style: normal; }
svg { display: block; flex: none; overflow: visible; }
p, h1 { margin: 0; }
button { font: inherit; color: inherit; padding: 0; }
.sprite { position: absolute; }
.i12 { width: 12px; height: 16px; }
.i14 { width: 14px; height: 14px; }
.i15 { width: 16px; height: 16px; }
.i16 { width: 17px; height: 17px; }
.i18 { width: 19px; height: 19px; }
.i-fl { width: 11px; height: 17px; }
.i-fl2 { width: 12px; height: 17px; }
.i-ex { width: 11px; height: 17px; }
.i-bolt { width: 15px; height: 19px; }
.i-arrow { width: 15px; height: 11px; }
.chev { width: 10px; height: 6px; }

/* VMware chrome */
.vm-title { height: 30px; border-top: 1px solid #0c0c0c; border-bottom: 1px solid #6a6a6a; background: #383838; color: #f0f0f0; display: flex; align-items: center; padding: 2px 0 0 4px; font-size: 14.2px; font-family: "Open Sans", "Noto Sans", sans-serif; }
.vm-logo { width: 20px; height: 20px; margin: -2px 4px 0 0; }
.win-ctrl { margin-left: auto; display: flex; gap: 18px; padding-right: 9px; margin-top: -2px; }
.win-ctrl svg { width: 12px; height: 12px; }
.vm-bar { height: 43px; background: #383838; border-bottom: 1px solid #7a7a7a; border-right: 1px solid #777; display: flex; align-items: center; padding: 1px 0 0 9px; color: #eee; font-family: "Open Sans", "Noto Sans", sans-serif; font-size: 14px; }
.caret { width: 0; height: 0; border: 4.500px solid transparent; border-top: 5.500px solid #fff; border-bottom: 0; }
.caret.white { margin-left: 11px; }
.caret.grey { border-top-color: #777; margin-left: 15px; }
.vm-sep { width: 1px; height: 34px; background: #5a5a5a; margin-left: 10px; }
.pause { display: flex; gap: 5px; margin-left: 18px; }
.pause b { width: 5px; height: 21px; background: #f3661c; }
.pause b + b { width: 5px; }
.vm-send { width: 22px; height: 24px; margin-left: 13px; }
.vm-full { width: 24px; height: 24px; margin-left: 14px; }
.vm-more { width: 18px; height: 12px; margin-left: auto; margin-right: 11px; }

.kali-bar { height: 29px; flex: none; display: flex; align-items: center; color: #eee; font-size: 13px; font-weight: 500; padding: 3px 0 0 15px; background: linear-gradient(90deg, #2a2240 0%, #2c2540 12%, #332a4c 22%, #232445 40%, #1e2040 55%, #2d2748 68%, #272746 75%, #1d2040 82%, #1d1f3a 100%); }
.pill { width: 25px; height: 8px; border-radius: 4px; background: #fff; margin-top: -4px; }
.pdot { width: 5px; height: 5px; border-radius: 50%; background: #b8b8c0; margin: -4px 0 0 6px; }
.k-apps { margin-left: 28px; }
.k-places { margin-left: 24px; }
.k-date { margin-left: 738px; }
.k-time { margin-left: 17px; }
.k-t { font-weight: 500; font-size: 12.2px; }
.k-cpu { width: 15px; height: 15px; margin-left: 554px; }
.k-1 { margin-left: 7px; }
.k-mem { width: 14px; height: 13px; margin-left: 22px; }
.k-35 { margin-left: 6px; }
.k-up { width: 10px; height: 14px; margin-left: 16px; }
.k-r1 { margin-left: 8px; }
.k-down { width: 10px; height: 14px; margin-left: 10px; }
.k-r2 { margin-left: 7px; }
.k-scr { width: 14px; height: 14px; margin-left: 34px; }
.k-vol { width: 15px; height: 15px; margin-left: 13px; }
.k-pow { width: 13px; height: 14px; margin-left: 13px; }

.zap-title { height: 43px; flex: none; background: #191c28; display: flex; align-items: center; justify-content: center; color: #f4f4f4; font-size: 14px; font-weight: 600; position: relative; padding-top: 2px; }
.dragon { position: absolute; left: 0; top: 0; width: 220px; height: 43px; }
.zap-name { position: relative; }
.dots { position: absolute; right: 12px; top: 12px; display: flex; gap: 5px; }
.dots i { width: 18px; height: 18px; border-radius: 50%; background: #3c4050; }
.dots .cl { background: #13a884; color: #10141c; font-size: 15px; line-height: 16px; font-weight: 800; text-align: center; }

.menu { height: 27px; flex: none; background: #fff; display: flex; align-items: center; gap: 16.3px; padding: 2px 0 0 8px; font-size: 14.7px; }

.tool { height: 26px; flex: none; background: #f2f2f2; border: 1px solid #bdbdbd; border-top-width: 2px; display: flex; align-items: center; padding: 2px 0 0 2px; }
.combo { background: #fff; border: 1px solid #c8c8c8; border-radius: 3px; display: flex; align-items: center; justify-content: space-between; padding: 0 6px 0 6px; }
.mode { width: 147px; height: 21px; font-size: 15.6px; padding-left: 5px; }
.tb { width: 26px; height: 22px; display: flex; align-items: center; justify-content: center; border-radius: 4px; }
.tb svg { width: 19px; height: 19px; }
.tb.on { background: #d6d6d6; }
.tsep { width: 1px; height: 20px; background: #cfcfcf; flex: none; }
.tsep.wide { margin-right: 2px; }

/* Upper split */
.upper { height: 318px; flex: none; display: flex; }
.left { width: 636px; display: flex; flex-direction: column; }
.tabs { height: 35px; display: flex; align-items: stretch; border-bottom: 2px solid #cbcbcb; }
.tab { display: flex; align-items: center; position: relative; padding-top: 1px; font-size: 14.6px; }
.w76 { width: 76px; gap: 5px; padding-left: 12px; box-shadow: 0 2px 0 #9cbfe3, inset 0 -1px 0 #9cbfe3; }
.add { align-self: center; margin-left: 14px; }
.ltool { height: 33px; display: flex; align-items: center; gap: 9px; padding-left: 9px; }
.tree { height: 248px; margin-left: 2px; margin-right: 2px; background: #fff; border: 1px solid #c4c4c4; font-size: 14.7px; padding-left: 5px; }
.node { display: flex; align-items: center; gap: 3px; }
.chv { width: 10px; height: 6px; }
.chv.rot { transform: rotate(-90deg); }
.n1 { height: 24px; margin-top: 1px; padding-bottom: 1px; }
.n1 .chv { margin-right: 3px; }
.n2 { height: 22px; padding-left: 33px; gap: 4px; }
.n3 { height: 22px; margin-top: 5px; }
.n3 .chv { margin-right: 5px; }
.n3 span { margin-left: 4px; }
.vsplit { width: 6px; position: relative; display: flex; flex-direction: column; align-items: center; gap: 8px; padding-top: 7px; }
.vsplit svg { width: 6px; height: 8px; }
.vgrip { position: absolute; left: 2px; top: 155px; width: 2px; height: 14px; background: repeating-linear-gradient(180deg, #aaa 0 2px, transparent 2px 4px); }
.right { flex: 1; min-width: 0; display: flex; flex-direction: column; }
.qs { width: 143px; gap: 5px; padding-left: 12px; box-shadow: 0 2px 0 #3f80c8, inset 0 -1px 0 #3f80c8; }
.r1 { margin-left: 11px; gap: 4px; }
.r2 { margin-left: 24px; gap: 4px; }
.r3 { margin-left: 24px; gap: 3px; }
.add2 { align-self: center; margin-left: 25px; }
.panel { height: 283px; display: flex; border-left: 1px solid #bbb; background: #fff; border-bottom: 1px solid #c4c4c4; border-top: 1px solid #ccc; }
.scan { flex: 1; min-width: 0; overflow: hidden; border-left: 1px solid #ccc; }
.scan-head { display: flex; align-items: flex-start; height: 75px; padding-left: 5px; padding-top: 4px; }
.back { width: 38px; height: 38px; margin-top: 15px; background: #fff; border: 1px solid #ccc; border-radius: 3px; font-size: 21px; line-height: 30px; z-index: 1; }
.zaplogo { width: 72px; height: 70px; margin-left: -2px; z-index: 2; }
h1 { font-size: 45px; font-weight: 400; line-height: 70px; margin: -1px 0 0 299px; color: #000; white-space: nowrap; }
.brand { margin-left: auto; display: flex; margin-right: 8px; }
.brand-t { margin-left: 2px; margin-top: 12px; }
.brand-l1 { height: 31px; padding-top: 1px; }
.bz { font-size: 33px; line-height: 28px; color: #0f5ca8; font-weight: 700; }
.by { font-size: 17px; color: #0f5ca8; font-weight: 600; margin-left: 3px; }
.bc { display: block; font-family: "Liberation Mono", monospace; font-size: 22px; line-height: 20px; color: #221a80; margin-left: -1px; }
.p1 { margin-left: 10px; line-height: 20px; margin-top: 10px; font-size: 14.7px; }
.p2 { margin-left: 10px; line-height: 20px; margin-top: 11px; font-size: 14.7px; }
.frow { display: flex; align-items: center; margin-left: 45px; font-size: 14.7px; }
.frow label { width: 158px; flex: none; }
.url { margin-top: 54px; height: 25px; }
.urlbox { width: 918px; height: 25px; border: 1px solid #8db6e0; border-radius: 2px; display: flex; align-items: center; justify-content: space-between; padding-left: 6px; box-shadow: 0 0 0 1px #e8e8e8; font-size: 15px; }
.urldrop { width: 25px; height: 23px; border-left: 1px solid #ddd; background: #f8f8f8; display: flex; align-items: center; justify-content: center; }
.select { width: 101px; height: 25px; margin-left: 1px; background: #fff; border: 1px solid #ccc; border-radius: 3px; display: flex; align-items: center; justify-content: center; gap: 3px; }
.trad { margin-top: 12px; height: 14px; }
.trad label { width: 165px; white-space: nowrap; }
.check { width: 14px; height: 14px; border: 1px solid #5aa3e8; border-radius: 2px; background: #fff; }
.check svg { width: 12px; height: 12px; }
.ajax { margin-top: 14px; height: 26px; }
.ajax label { width: 162px; }
.cm1 { width: 108px; height: 26px; }
.with { margin: 0 10px; }
.cm2 { width: 160px; height: 26px; margin-left: 0; }
.vscroll { width: 11px; flex: none; background: #fff; border-left: 1px solid #ccc; padding: 8px 2px 0; }
.vscroll i { display: block; width: 6px; height: 213px; background: #e2e2e2; border-radius: 3px; }
.hgrip { height: 1px; flex: none; }

.btabs { height: 35px; flex: none; display: flex; border-bottom: 1px solid #c6c6c6; border-top: 1px solid #c6c6c6; font-size: 14.6px; }
.btab { display: flex; align-items: center; gap: 5px; }
.w-hist { margin-left: 12px; width: 92px; }
.w-sear { width: 91px; gap: 4px; }
.w-aler { width: 84px; gap: 3px; }
.w-outp { width: 94px; gap: 5px; }
.w-ajax { width: 127px; gap: 1px; }
.w-spid { width: 87px; gap: 3px; }
.w-webs { width: 113px; gap: 3px; }
.w-acti { width: 166px; padding-left: 15px; gap: 7px; box-shadow: inset 0 -3px 0 #9cbfe3; }
.add3 { align-self: center; margin-left: 15px; }

.scanbar { height: 40px; flex: none; display: flex; align-items: center; font-size: 14.6px; white-space: nowrap; }
.sb-mix { margin-left: 11px; }
.sb-fl { margin-left: 13px; }
.sb-new { margin-left: 7px; }
.sb-prog { margin-left: 14px; }
.pcombo { width: 253px; height: 26px; margin-left: 3px; padding: 0 8px 0 5px; font-size: 15.3px; }
.sb-p { margin-left: 10px; }
.sb-s { margin-left: 16px; }
.sb-c { margin-left: 13px; }
.bar { width: 499px; height: 18px; margin-left: 10px; border-radius: 2px; background: #2484e0; color: #dbe6f0; font-size: 12.5px; line-height: 18px; text-align: center; }
.sb-b { margin-left: 12px; }
.sb-cs { margin-left: 7px; }
.sb-nr { margin-left: 10px; }
.sb-na { margin-left: 14px; }
.i-ex { margin-left: 20px; }
.sb-ex { margin-left: 6px; }
.sb-g { margin-left: auto; margin-right: 10px; }

.subtabs { height: 30px; flex: none; display: flex; align-items: stretch; border-bottom: 2px solid #c0c0c0; font-size: 14.6px; }
.st { padding: 0 12px; line-height: 29px; }
.st.sel { box-shadow: 0 2px 0 #9cbfe3, inset 0 -1px 0 #9cbfe3; }

.grid { flex: none; }
.hdr, .row { display: grid; grid-template-columns: 126px 228px 227px 139px 402px 120px 158px 109px 207px 193px; }
.hdr { grid-template-columns: 126px 228px 227px 139px 402px 120px 158px 109px 207px 193px 11px; height: 25px; background: #fff; border-bottom: 1px solid #e2e2e2; font-size: 14.7px; }
.hdr > div { text-align: center; line-height: 26px; border-right: 1px solid #e6e6e6; }
.hdr .corner { border-right: 0; padding: 5px 0 0 2px; }
.corner svg { width: 8px; height: 11px; }
.gbody { height: 353px; display: flex; overflow: hidden; background: #fff; }
.rows { width: 1909px; flex: none; margin-top: -14px; font-size: 15px; }
.row { height: 23px; line-height: 23px; white-space: nowrap; }
.row i { padding-left: 4px; overflow: hidden; }
.row i:nth-child(1) { text-align: right; padding: 0 5px 0 0; }
.row i:nth-child(2), .row i:nth-child(3) { padding-left: 3px; letter-spacing: .22px; }
.row i:nth-child(5) { letter-spacing: .14px; }
.row i:nth-child(6) { text-align: right; padding: 0 4px 0 0; }
.row i:nth-child(7) { padding-left: 3px; }
.gscroll { flex: 1; border-left: 1px solid #ccc; display: flex; flex-direction: column; justify-content: flex-end; padding: 0 2px 1px; }
.gscroll i { display: block; height: 20px; width: 6px; background: #e2e2e2; border-radius: 3px; }

.status { height: 21px; flex: none; border-top: 2px solid #c0c0c0; border-bottom: 2px solid #c8c8c8; background: #f4f4f4; display: flex; justify-content: space-between; align-items: center; font-size: 14.7px; box-shadow: inset 1px 0 #ccc, inset -1px 0 #ccc; padding-top: 2px; }
.st-left { display: flex; align-items: center; padding-left: 11px; }
.al { width: 49px; }
.fl { display: flex; align-items: center; gap: 4px; width: 39px; }
.st-sep { width: 1px; height: 16px; background: #ccc; margin-right: 2px; margin-left: -7px; }
.proxy { font-size: 15px; letter-spacing: .6px; }
.st-right { display: flex; align-items: center; padding-right: 9px; }
.cs { margin-right: 5px; font-size: 14.3px; }
.si { display: flex; align-items: center; gap: 3px; width: 39px; }
.si:last-child { width: auto; }
.c-red { color: #f04a2a; } .c-dred { color: #b01818; } .c-dgrey { color: #444; }
.c-fr { color: #f0603a; } .c-fo { color: #f79c1c; } .c-fy { color: #e2b21a; } .c-fb { color: #4f8fd6; }
.c-dk { color: #555; } .c-blue { color: #1a2fd0; } .c-lb { color: #2a6fc8; }

/* Taskbar */
.taskbar { height: 60px; flex: none; margin-top: 1px; background: #1b1f26; display: flex; align-items: center; color: #fff; font-family: "Open Sans", "Noto Sans", sans-serif; font-size: 14px; }
.widget { width: 686px; flex: none; display: flex; align-items: center; padding-left: 28px; }
.w-ic { width: 24px; height: 36px; position: relative; }
.w-ic svg { width: 24px; height: 36px; }
.w-badge { position: absolute; left: 10px; top: -3px; width: 20px; height: 20px; border-radius: 50%; background: #f9a0a8; color: #222; font-size: 13px; font-weight: 400; line-height: 20px; text-align: center; }
.w-t { display: flex; flex-direction: column; margin-left: 12px; line-height: 20px; font-size: 14.7px; }
.w-s { color: #c2c2c2; font-size: 14px; }
.start { width: 29px; height: 29px; }
.search { width: 125px; height: 40px; border-radius: 20px; background: #2a2e34; margin-left: 18px; display: flex; align-items: center; padding-left: 29px; gap: 6px; font-size: 14px; }
.search svg { width: 18px; height: 20px; }
.apps { display: flex; margin-left: 4px; }
.app { width: 55px; height: 60px; position: relative; display: flex; align-items: center; justify-content: center; }
.app svg { width: 30px; height: 30px; }
.app.active::before { content: ""; position: absolute; left: 5px; top: 5px; width: 44px; height: 50px; background: #2c3036; border-radius: 5px; }
.app.active svg { position: relative; }
.adot { position: absolute; left: 24px; bottom: 5px; width: 7px; height: 4px; border-radius: 2px; background: #8d9096; }
.aline { position: absolute; left: 16px; bottom: 7px; width: 20px; height: 3px; border-radius: 2px; background: #40e03a; }
.avatar { position: absolute; left: 31px; top: 9px; width: 20px; height: 20px; border-radius: 50%; background: radial-gradient(circle at 35% 35%, #a89cb0, #5b6258 60%, #3a3d48); }
.wa { position: absolute; left: 29px; top: 8px; width: 24px; height: 24px; border-radius: 50%; background: #3fe03c; color: #111; font-size: 13px; font-weight: 400; line-height: 24px; text-align: center; }
.tray { margin-left: auto; display: flex; align-items: center; padding-right: 24px; }
.tr-up { width: 14px; height: 8px; }
.tr-cloud { margin-left: 23px; width: 20px; height: 20px; position: relative; }
.tr-cloud svg { width: 16px; height: 14px; }
.tr-cloud b { position: absolute; right: -2px; bottom: -2px; width: 12px; height: 12px; border-radius: 50%; background: #e0202c; font-size: 11px; line-height: 11px; text-align: center; }
.tr-mic { width: 14px; height: 22px; margin-left: 24px; }
.tr-lang { display: flex; flex-direction: column; align-items: center; width: 30px; margin-left: 26px; line-height: 20px; font-size: 14.5px; }
.tr-wifi { width: 20px; height: 16px; margin-left: 22px; }
.tr-vol { width: 20px; height: 16px; margin-left: 9px; }
.tr-bat { width: 20px; height: 16px; margin-left: 12px; }
.tr-clock { display: flex; flex-direction: column; align-items: flex-end; margin-left: 19px; line-height: 20px; font-size: 15px; }
```
